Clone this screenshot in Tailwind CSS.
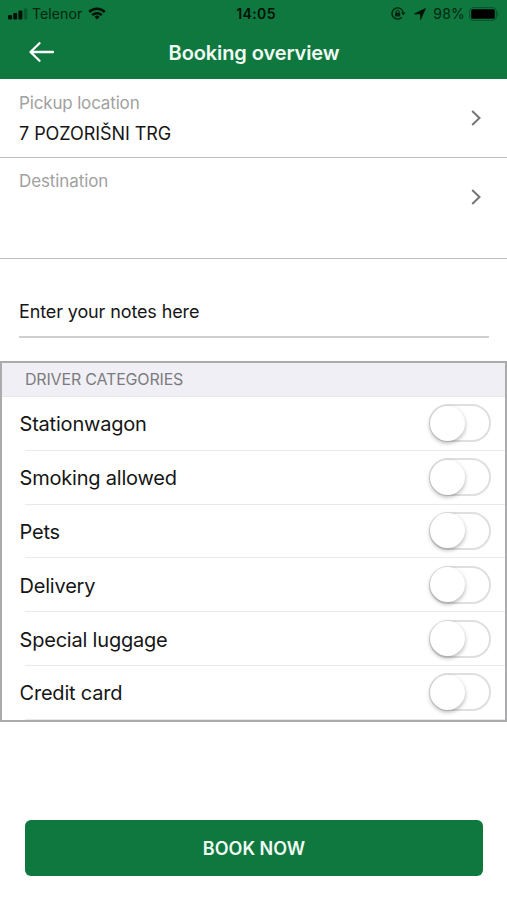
<!DOCTYPE html>
<html lang="en">
<head>
<meta charset="utf-8">
<title>Booking overview</title>
<script src="https://cdn.jsdelivr.net/npm/@tailwindcss/browser@4"></script>
</head>
<body class="w-[507px] h-[900px] overflow-hidden bg-white font-[Inter,sans-serif] text-[#161616] flex flex-col">
<header class="h-[79px] shrink-0 bg-[#0e783f]">
  <div class="h-[27px] grid grid-cols-3 items-center pl-2 pr-[7px] text-[#02250f]">
    <div class="flex items-center">
      <svg class="w-[20px] h-[12px]" viewBox="0 0 20 12"><g fill="#001207"><rect x="0" y="7" width="4" height="4.500" rx="1"/><rect x="5.200" y="5" width="4" height="6.500" rx="1"/><rect x="10.400" y="2.500" width="4" height="9" rx="1"/></g><rect x="15.800" y="0.500" width="3.500" height="11" rx="1" fill="#0a5a2e"/></svg>
      <span class="ml-1 text-[14px] leading-none tracking-[0.1px]">Telenor</span>
      <svg class="ml-[6px] w-[18px] h-[13px]" viewBox="0 0 18 13" fill="none" stroke="#001207" stroke-width="2.500"><path d="M1.200 5a11 11 0 0 1 15.600 0M4.200 8.200a6.800 6.800 0 0 1 9.600 0"/><path d="M9 12.500l-2.500-2.700a3.600 3.600 0 0 1 5 0z" fill="#001207" stroke="none"/></svg>
    </div>
    <div class="text-center text-[14px] leading-none font-semibold tracking-[0.4px] text-[#001207] pl-[4px]">14:05</div>
    <div class="flex items-center justify-end">
      <svg class="w-[15px] h-[13px]" viewBox="0 0 15 13" fill="none" stroke="#02250f" stroke-width="1.400"><path d="M10.800 10.200a5.600 5.600 0 1 1 1.400-4.200"/><path d="M10 5.600h4.600l-2.300 3z" fill="#02250f" stroke="none"/><rect x="4" y="5.800" width="5.200" height="3.700" rx=".6" fill="#02250f" stroke="none"/><path d="M5.100 6V4.800a1.500 1.500 0 0 1 3 0V6" stroke-width="1"/></svg>
      <svg class="ml-2 w-[12px] h-[12px]" viewBox="0 0 12 12"><path d="M11.400.6L6.600 11.400V5.800H.6z" fill="#001207" stroke="#001207" stroke-width=".8" stroke-linejoin="round"/></svg>
      <span class="ml-[7px] text-[14px] leading-none tracking-[0.2px]">98%</span>
      <svg class="ml-[4px] w-[31px] h-[14px]" viewBox="0 0 31 14"><rect x=".7" y=".7" width="26.600" height="12.600" rx="3.200" fill="none" stroke="#07502a" stroke-width="1"/><rect x="2.200" y="2.200" width="23.600" height="9.600" rx="1.500" fill="#000"/><path d="M28.500 4.700q2 2.300 0 4.600z" fill="#07502a"/></svg>
    </div>
  </div>
  <div class="relative h-[52px] flex items-center justify-center pl-[1px]">
    <svg class="absolute left-[29px] top-[15px] w-[25px] h-[20px]" viewBox="0 0 25 20" fill="none" stroke="#fff" stroke-width="2.300" stroke-linecap="round" stroke-linejoin="round"><path d="M24 10H2M10.500 1.200L1.500 10l9 8.800"/></svg>
    <h1 class="text-[20px] leading-6 font-semibold tracking-[-0.1px] text-[#f2fbf4] whitespace-nowrap">Booking overview</h1>
  </div>
</header>
<section class="h-[79px] shrink-0 border-b-[1.5px] border-[#bcbcbc] flex items-center justify-between pl-[19px] pr-[26px]">
  <div>
    <div class="text-[17px] leading-[22px] tracking-[-0.16px] text-[#a1a1a1]">Pickup location</div>
    <div class="mt-[9px] text-[18px] leading-[22px] tracking-[-0.06px]">7 POZORIŠNI TRG</div>
  </div>
  <svg class="w-[10px] h-[16px]" viewBox="0 0 10 16" fill="none" stroke="#757575" stroke-width="2"><path d="M1.200 1L8.500 8l-7.300 7"/></svg>
</section>
<section class="h-[101px] shrink-0 border-b-[1.5px] border-[#bcbcbc] flex items-start justify-between pl-[19px] pr-[26px]">
  <div class="pt-3 text-[17px] leading-[22px] tracking-[-0.1px] text-[#a1a1a1]">Destination</div>
  <svg class="mt-[31px] w-[10px] h-[16px]" viewBox="0 0 10 16" fill="none" stroke="#757575" stroke-width="2"><path d="M1.200 1L8.500 8l-7.300 7"/></svg>
</section>
<section class="h-[79px] shrink-0 ml-[19px] mr-[18px] border-b-2 border-[#cfcfcf] pt-[42px] text-[18px] leading-[22px] tracking-[-0.12px]">Enter your notes here</section>
<section class="mt-[23px] h-[361px] shrink-0 border-2 border-[#ababad] flex flex-col">
  <h2 class="h-[34px] shrink-0 bg-[#f0eff5] border-b border-[#e7e7ea] pl-[23px] text-[16px] leading-[33px] tracking-[-0.18px] text-[#7c7c80]">DRIVER CATEGORIES</h2>
  <ul id="rows"></ul>
</section>
<button class="mt-[98px] ml-[25px] w-[458px] h-[56px] shrink-0 rounded-md bg-[#0e783f] text-[18px] font-semibold text-[#f2fbf4]">BOOK NOW</button>
<script>
const categories = ["Stationwagon", "Smoking allowed", "Pets", "Delivery", "Special luggage", "Credit card"];
document.getElementById("rows").innerHTML = categories.map((name) => `
  <li class="h-[53.8px] flex flex-col">
    <div class="flex-1 flex items-center justify-between pl-[17.5px] pr-[14px]">
      <span class="pt-[2px] text-[20px] leading-6 tracking-[-0.2px]">${name}</span>
      <span class="w-[62px] h-[38px] rounded-full border-2 border-[#dfdfdf] flex items-center">
        <span class="w-[35px] h-[35px] -ml-px rounded-full bg-white shadow-[0_2px_4px_rgba(0,0,0,0.3)]"></span>
      </span>
    </div>
    <div class="ml-[23px] h-px bg-[#e9e9e9]"></div>
  </li>`).join("");
</script>
</body>
</html>
